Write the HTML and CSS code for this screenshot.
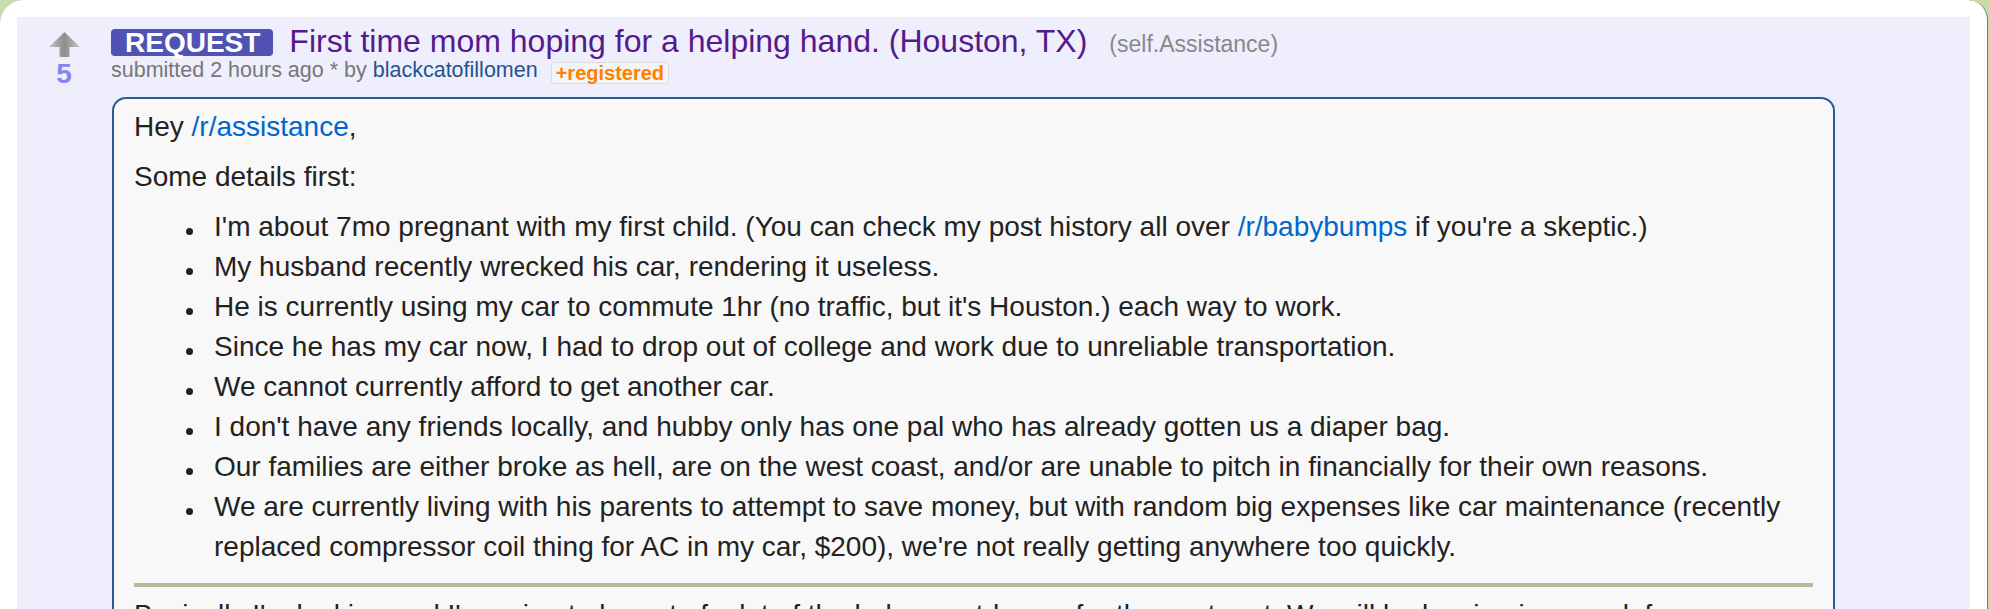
FILE: index.html
```html
<!DOCTYPE html>
<html>
<head>
<meta charset="utf-8">
<title>First time mom hoping for a helping hand</title>
<link rel="stylesheet" href="styles.css">
</head>
<body>
<div class="page">
  <div class="thing">
    <div class="midcol">
      <svg class="arrow" width="31" height="25" viewBox="0 0 31 25">
        <defs>
          <linearGradient id="ag" x1="0" y1="0" x2="1" y2="0">
            <stop offset="0" stop-color="#c4c4c4"/>
            <stop offset="0.5" stop-color="#8e8e8e"/>
            <stop offset="1" stop-color="#c4c4c4"/>
          </linearGradient>
        </defs>
        <polygon points="15.5,0 31,15 20.5,15 20.5,25 10.5,25 10.5,15 0,15" fill="url(#ag)"/>
      </svg>
      <div class="score">5</div>
    </div>
    <div class="entry">
      <div class="title-row"><span class="linkflair">REQUEST</span><a class="title" href="#">First time mom hoping for a helping hand. (Houston, TX)</a><span class="domain">(self.Assistance)</span></div>
      <p class="tagline">submitted 2 hours ago * by <a class="author" href="#">blackcatofillomen</a><span class="userflair">+registered</span></p>
      <div class="usertext">
        <p>Hey <a href="#">/r/assistance</a>,</p>
        <p>Some details first:</p>
        <ul>
          <li>I'm about 7mo pregnant with my first child. (You can check my post history all over <a href="#">/r/babybumps</a> if you're a skeptic.)</li>
          <li>My husband recently wrecked his car, rendering it useless.</li>
          <li>He is currently using my car to commute 1hr (no traffic, but it's Houston.) each way to work.</li>
          <li>Since he has my car now, I had to drop out of college and work due to unreliable transportation.</li>
          <li>We cannot currently afford to get another car.</li>
          <li>I don't have any friends locally, and hubby only has one pal who has already gotten us a diaper bag.</li>
          <li>Our families are either broke as hell, are on the west coast, and/or are unable to pitch in financially for their own reasons.</li>
          <li>We are currently living with his parents to attempt to save money, but with random big expenses like car maintenance (recently replaced compressor coil thing for AC in my car, $200), we're not really getting anywhere too quickly.</li>
        </ul>
        <hr>
        <p>Basically I'm looking and I'm going to be out of a lot of the baby must-haves for the next part. We will be leaving in a week for a shower...</p>
      </div>
    </div>
  </div>
</div>
</body>
</html>
```

FILE: styles.css
```css
html, body {
  margin: 0;
  padding: 0;
}
body {
  background: #c9dca9;
  font-family: "Liberation Sans", Arial, Helvetica, sans-serif;
  overflow: hidden;
}
.page {
  background: #ffffff;
  width: 1988px;
  min-height: 760px;
  border-radius: 24px 20px 0 0;
  border-right: 1px solid #6b7f5f;
  padding: 17px 17px 0 17px;
  box-sizing: border-box;
}
.thing {
  background: #eeeefd;
  display: flex;
  padding-top: 6px;
  min-height: 740px;
}
.midcol {
  width: 32px;
  margin-left: 31px;
  margin-right: 31px;
  display: flex;
  flex-direction: column;
  align-items: center;
}
.arrow {
  display: block;
  margin-top: 9px;
}
.score {
  margin-top: 3px;
  font-weight: bold;
  font-size: 28px;
  line-height: 28px;
  color: #8585f2;
}
.entry {
  flex: 1;
  min-width: 0;
}
.title-row {
  display: flex;
  align-items: baseline;
  line-height: 36px;
  height: 36px;
}
.linkflair {
  display: inline-block;
  background: #5052b4;
  color: #ffffff;
  font-weight: bold;
  font-size: 28px;
  line-height: 27px;
  height: 27px;
  padding: 0 13px 0 14px;
  border-radius: 4px;
  margin-right: 16px;
}
.title {
  font-size: 32px;
  color: #551a8b;
  text-decoration: none;
}
.domain {
  font-size: 23px;
  color: #888888;
  margin-left: 22px;
}
.tagline {
  margin: 0;
  font-size: 21.5px;
  line-height: 22px;
  color: #777777;
}
.author {
  color: #24548e;
  text-decoration: none;
}
.userflair {
  display: inline-block;
  margin-left: 13px;
  font-size: 20px;
  line-height: 20px;
  font-weight: bold;
  color: #ff8000;
  background: #f4f4f6;
  border: 1px solid #dddddd;
  border-radius: 3px;
  padding: 0 4px;
  vertical-align: -3px;
}
.usertext {
  margin: 13px 135px 0 1px;
  background: #f8f8f8;
  border: 2px solid #2b5a94;
  border-radius: 14px;
  padding: 8px 20px 10px 20px;
  font-size: 28px;
  line-height: 40px;
  color: #222222;
}
.usertext p {
  margin: 0 0 10px 0;
}
.usertext a {
  color: #0066cc;
  text-decoration: none;
}
.usertext ul {
  margin: 0 0 16px 0;
  padding-left: 80px;
  list-style: none;
}
.usertext li {
  position: relative;
}
.usertext li::before {
  content: "";
  position: absolute;
  left: -28px;
  top: 21px;
  width: 7px;
  height: 7px;
  border-radius: 50%;
  background: #222222;
}
.usertext hr {
  height: 4px;
  border: 0;
  background: #bcb8a0;
  margin: 0 0 8px 0;
}
```
